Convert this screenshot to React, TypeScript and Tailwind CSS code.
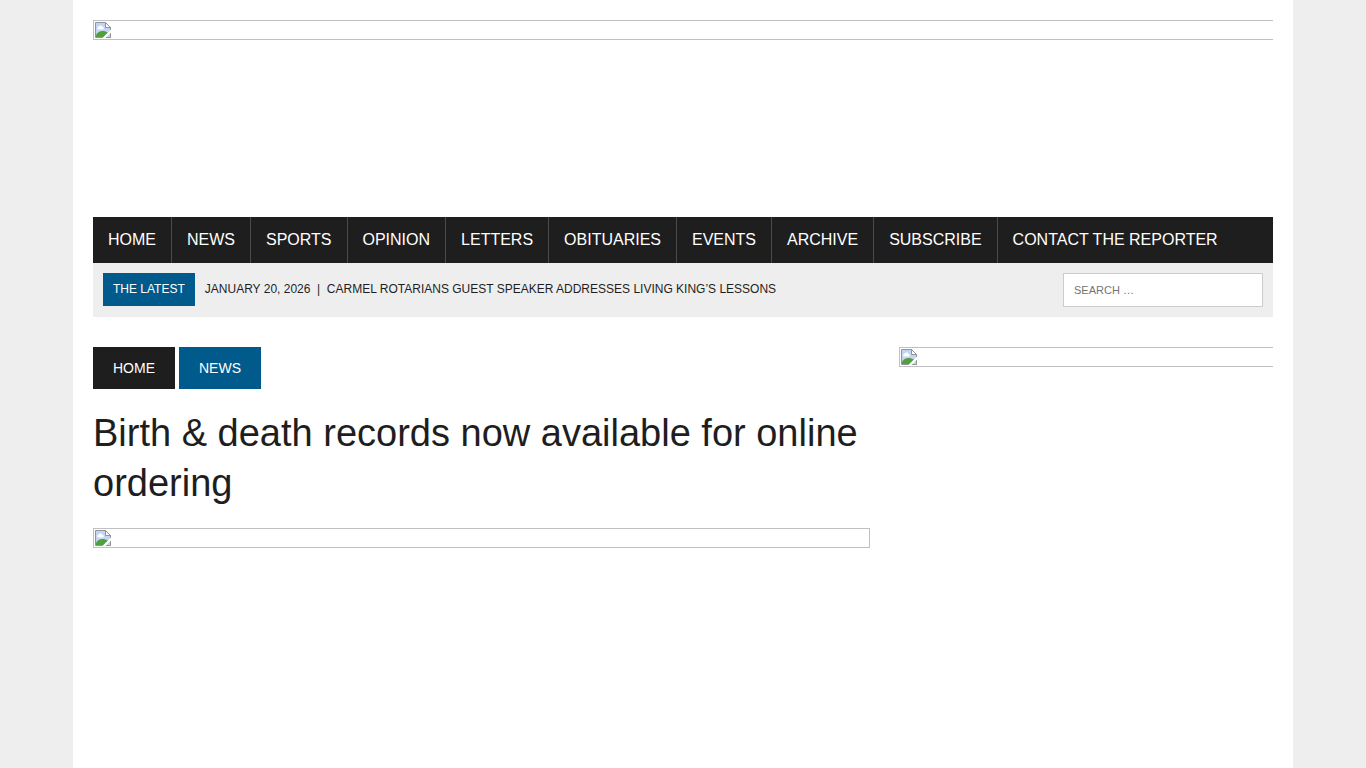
import React from "react";

const menu = [
  "Home",
  "News",
  "Sports",
  "Opinion",
  "Letters",
  "Obituaries",
  "Events",
  "Archive",
  "Subscribe",
  "Contact the Reporter",
];

function MissingImageIcon() {
  return (
    <svg width="16" height="16" viewBox="0 0 16 16" className="block shrink-0" aria-hidden="true">
      <path d="M0.500 0.500h10l5 5v10h-15z" fill="#c3d5f2" stroke="#8f949b" />
      <path d="M10.500 0.500v5h5z" fill="#ffffff" stroke="#8f949b" />
      <path d="M3 7.500a1.500 1.500 0 0 1 0.500-2.800a2.200 2.200 0 0 1 4 0A1.500 1.500 0 0 1 8 7.500z" fill="#ffffff" />
      <path d="M1 15v-2C3 9 8 7.500 13 10.500L8.500 15z" fill="#4fa03c" />
      <path d="M16 7.500V10.500L10.500 16H7.500z" fill="#ffffff" />
      <path d="M11.500 15.500h4v-4" fill="#c8dcc4" stroke="#8f949b" />
    </svg>
  );
}

function MissingImage({ className = "", label }: { className?: string; label: string }) {
  return (
    <div role="img" aria-label={label} className={`h-5 border border-[#c0c0c0] p-px ${className}`}>
      <MissingImageIcon />
    </div>
  );
}

export default function App() {
  return (
    <div className="min-h-screen bg-[#eeeeee] font-['Liberation_Sans',Arial,sans-serif] text-[#1f1e1e]">
      <div className="mx-auto min-h-screen max-w-[1220px] bg-white px-5 pt-5">
        <header>
          <a href="#home" className="block h-[197px]">
            <MissingImage label="Site header" className="border-r-0" />
          </a>
          <nav aria-label="Main" className="bg-[#1f1e1e]">
            <ul className="flex flex-wrap">
              {menu.map((item) => (
                <li key={item} className="border-r border-[#4b4b4b] last:border-r-0">
                  <a href="#menu" className="block px-[15px] py-[13px] text-base leading-5 text-white uppercase">
                    {item}
                  </a>
                </li>
              ))}
            </ul>
          </nav>
          <div className="flex items-start justify-between bg-[#eeeeee] p-2.5 text-xs leading-[17px] uppercase">
            <div className="flex items-center gap-2.5">
              <span className="bg-[#005a8c] px-2.5 py-2 text-white">The Latest</span>
              <a href="#latest" className="whitespace-pre">
                {"January 20, 2026  |  Carmel Rotarians guest speaker addresses Living King’s lessons"}
              </a>
            </div>
            <form role="search" onSubmit={(e) => e.preventDefault()}>
              <input
                type="search"
                aria-label="Search"
                placeholder="SEARCH …"
                className="block h-[34px] w-[200px] border border-[#cccccc] bg-white px-2.5 text-[11px] outline-none placeholder:text-[#757575]"
              />
            </form>
          </div>
        </header>

        <div className="flex gap-[29px] pt-[30px]">
          <main className="min-w-0 flex-1">
            <nav aria-label="Breadcrumb" className="flex gap-1 text-sm leading-[18px] text-white uppercase">
              <a href="#home" className="bg-[#1f1e1e] px-5 py-3">
                Home
              </a>
              <a href="#news" className="bg-[#005a8c] px-5 py-3">
                News
              </a>
            </nav>
            <h1 className="mt-[19px] mb-5 text-[38px] leading-[50px]">
              Birth &amp; death records now available for online ordering
            </h1>
            <MissingImage label="Article photograph" />
          </main>
          <aside className="w-[374px] shrink-0">
            <MissingImage label="Advertisement" className="border-r-0" />
          </aside>
        </div>
      </div>
    </div>
  );
}
